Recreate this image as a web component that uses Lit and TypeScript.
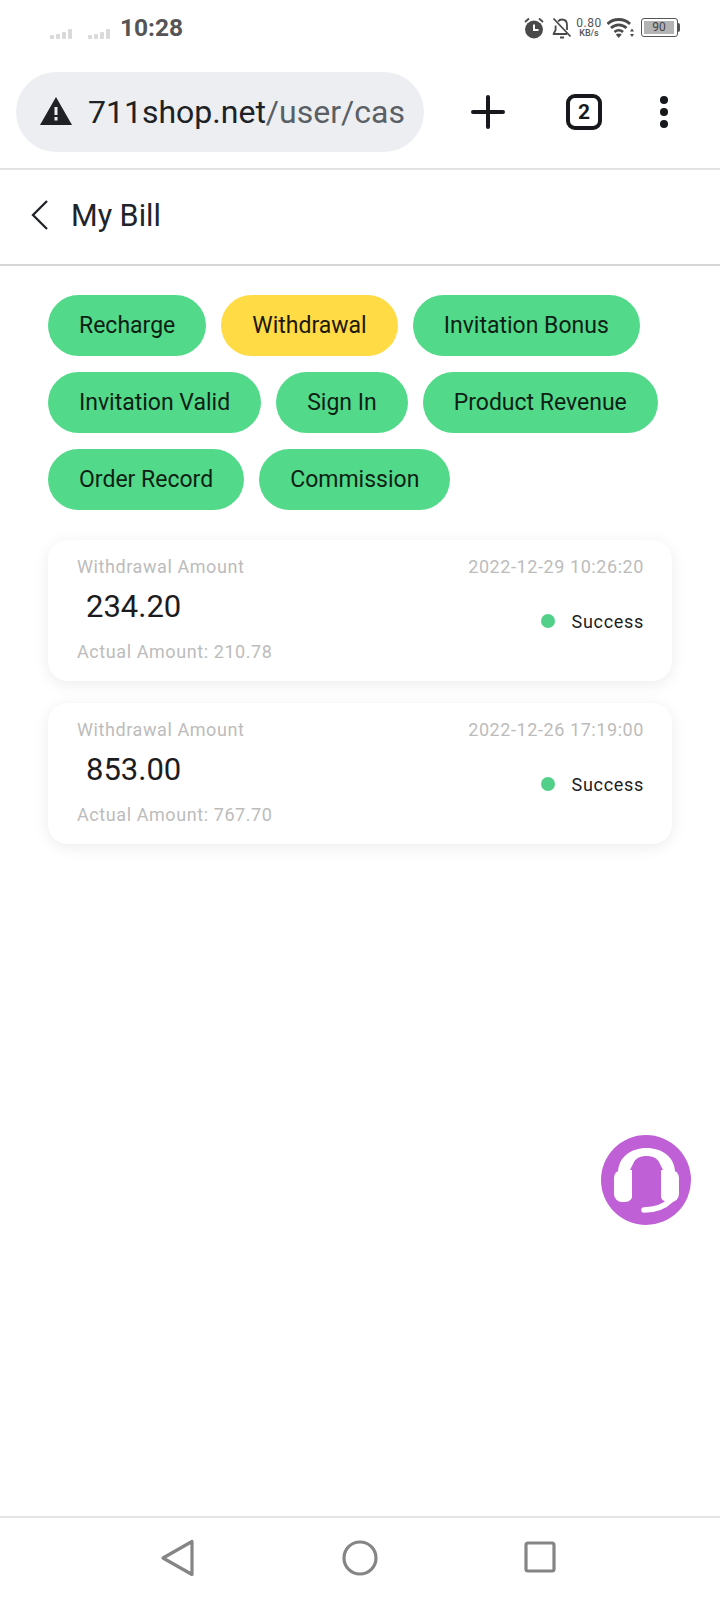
import { LitElement, html, css, svg } from "lit";
import { customElement } from "lit/decorators.js";

const chips = [
  ["Recharge", false],
  ["Withdrawal", true],
  ["Invitation Bonus", false],
  ["Invitation Valid", false],
  ["Sign In", false],
  ["Product Revenue", false],
  ["Order Record", false],
  ["Commission", false],
] as const;

const bills = [
  { date: "2022-12-29 10:26:20", amount: "234.20", actual: "210.78" },
  { date: "2022-12-26 17:19:00", amount: "853.00", actual: "767.70" },
];

const bars = svg`<rect x="0" y="7" width="4" height="4" rx="1"/><rect x="6" y="6" width="4" height="5" rx="1"/><rect x="12" y="4" width="4" height="7" rx="1"/><rect x="18" y="1" width="4" height="10" rx="1"/>`;

@customElement("app-root")
export class AppRoot extends LitElement {
  static styles = css`
    :host {
      display: block;
      width: 720px;
      height: 1600px;
      background: #fff;
      font-family: Roboto, "Liberation Sans", sans-serif;
      color: #1c1c1e;
    }
    .page {
      position: relative;
      display: flex;
      flex-direction: column;
      height: 1600px;
      overflow: hidden;
    }
    .status {
      height: 72px;
      display: flex;
      align-items: flex-start;
      padding: 13px 40px 0 50px;
      box-sizing: border-box;
    }
    .signal {
      width: 23px;
      height: 11px;
      fill: #dadada;
      margin-top: 15px;
      margin-right: 15px;
    }
    .signal + .signal {
      margin-right: 9px;
    }
    .time {
      font-size: 24.5px;
      line-height: 29px;
      font-weight: 700;
      color: #555;
    }
    .status-right {
      margin-left: auto;
      display: flex;
      align-items: center;
      height: 29px;
      color: #4a4a4a;
    }
    .alarm {
      width: 22px;
      height: 22px;
      margin-right: 7px;
    }
    .bell {
      width: 20px;
      height: 22px;
      margin-right: 4px;
    }
    .speed {
      display: flex;
      flex-direction: column;
      align-items: center;
      width: 26px;
      margin-right: 5px;
      color: #555;
    }
    .speed b {
      font-weight: 400;
      font-size: 12px;
      line-height: 12px;
      letter-spacing: 0.5px;
    }
    .speed i {
      font-style: normal;
      font-size: 9px;
      line-height: 9px;
      font-weight: 500;
    }
    .wifi {
      width: 27px;
      height: 22px;
      margin-right: 7px;
    }
    .battery {
      width: 37px;
      height: 19px;
      box-sizing: border-box;
      border: 1.5px solid #555;
      border-radius: 3px;
      padding: 2px;
      display: flex;
    }
    .battery span {
      flex: 1;
      background: #b4b4b4;
      font-size: 12px;
      line-height: 12px;
      text-align: center;
      color: #444;
      margin-right: 1px;
    }
    .cap {
      width: 2px;
      height: 9px;
      background: #555;
      border-radius: 0 2px 2px 0;
    }
    .toolbar {
      height: 98px;
      box-sizing: border-box;
      border-bottom: 2px solid #e2e2e2;
      display: flex;
      align-items: flex-start;
      padding-left: 16px;
    }
    .url {
      width: 408px;
      height: 80px;
      border-radius: 40px;
      background: #eceef1;
      display: flex;
      align-items: center;
      padding-left: 24px;
      box-sizing: border-box;
      overflow: hidden;
      white-space: nowrap;
      font-size: 32px;
      color: #5a5f66;
    }
    .url svg {
      width: 32px;
      height: 29px;
      margin-right: 16px;
      flex: none;
      fill: #202124;
      margin-top: -2px;
    }
    .url em {
      font-style: normal;
      color: #202124;
    }
    .plus {
      width: 34px;
      height: 34px;
      margin: 23px 0 0 47px;
    }
    .tabs {
      width: 36px;
      height: 36px;
      box-sizing: border-box;
      margin: 22px 0 0 61px;
      border: 4px solid #16181b;
      border-radius: 9px;
      display: flex;
      align-items: center;
      justify-content: center;
      font-size: 21px;
      font-weight: 700;
      color: #16181b;
    }
    .more {
      width: 8px;
      height: 32px;
      margin: 24px 0 0 58px;
      fill: #16181b;
    }
    .title {
      height: 96px;
      box-sizing: border-box;
      border-bottom: 2px solid #d6d6d6;
      display: flex;
      align-items: center;
      padding: 0 0 4px 30px;
      font-size: 30.5px;
      color: #20242a;
    }
    .title svg {
      width: 20px;
      height: 32px;
      margin-right: 21px;
    }
    .chips {
      display: flex;
      flex-wrap: wrap;
      gap: 16px 15px;
      padding: 29px 48px 0;
    }
    .chip {
      height: 61px;
      line-height: 62px;
      padding: 0 31px;
      border-radius: 31px;
      background: #52d98a;
      font-size: 23px;
      color: #0f1f14;
    }
    .chip.on {
      background: #ffdc46;
      color: #20180a;
    }
    .cards {
      display: flex;
      flex-direction: column;
      gap: 22px;
      padding: 30px 48px 0;
    }
    .card {
      height: 141px;
      box-sizing: border-box;
      padding: 14px 28px 0 29px;
      border-radius: 20px;
      background: #fff;
      box-shadow: 0 3px 16px rgba(0, 0, 0, 0.08);
      display: flex;
      flex-direction: column;
    }
    .row {
      display: flex;
      justify-content: space-between;
      align-items: center;
    }
    .muted {
      font-size: 18px;
      line-height: 26px;
      color: #bcbcbc;
      letter-spacing: 0.58px;
    }
    .mid {
      height: 58px;
      margin-top: 1px;
    }
    .amount {
      font-size: 31px;
      color: #1c1c1e;
      margin-left: 9px;
      margin-top: -8px;
    }
    .state {
      display: flex;
      align-items: center;
      font-size: 18px;
      color: #1c1c1e;
      letter-spacing: 0.7px;
      margin-top: 22px;
    }
    .dot {
      width: 14px;
      height: 14px;
      border-radius: 50%;
      background: #52d08a;
      margin-right: 17px;
    }
    .spacer {
      flex: 1;
    }
    .fab {
      position: absolute;
      left: 600.5px;
      top: 1135px;
      width: 90px;
      height: 90px;
    }
    .nav {
      height: 84px;
      box-sizing: border-box;
      border-top: 2px solid #e4e4e4;
      display: flex;
      align-items: flex-start;
      padding: 20px 0 0 158px;
      gap: 142px;
    }
    .nav svg {
      width: 40px;
      height: 40px;
      fill: none;
      stroke: #858585;
      stroke-width: 3.2;
      stroke-linejoin: round;
    }
  `;

  render() {
    return html`
      <div class="page">
        <div class="status">
          <svg class="signal" viewBox="0 0 23 11">${bars}</svg>
          <svg class="signal" viewBox="0 0 23 11">${bars}</svg>
          <span class="time">10:28</span>
          <div class="status-right">
            <svg class="alarm" viewBox="0 0 22 22">
              <circle cx="11" cy="12.5" r="9" fill="#4a4a4a" />
              <path d="M2 5 6 1.5M20 5 16 1.5" stroke="#4a4a4a" stroke-width="1.8" fill="none" />
              <path d="M11 7.5V13H15.5" stroke="#fff" stroke-width="2" fill="none" />
            </svg>
            <svg class="bell" viewBox="0 0 20 22" fill="none" stroke="#4a4a4a" stroke-width="1.8">
              <path d="M6 4.5C7 3.2 8.4 2.5 10 2.5c3.4 0 5 2.6 5 5.5v5M3.6 8.5V13L1.5 17H15" stroke-linejoin="round" />
              <path d="M1.5 1.5 18.5 19.5M8 20.5h4" />
            </svg>
            <div class="speed"><b>0.80</b><i>KB/s</i></div>
            <svg class="wifi" viewBox="0 0 27 22" fill="none" stroke="#4a4a4a" stroke-width="2.8">
              <path d="M0.5 7C6.500 1 17 1 23 7M4 11C8.500 6.800 15 6.800 19.500 11M7.500 15C10 12.800 13.500 12.800 16 15" />
              <path d="M11.750 21 8.800 17.500C10.500 16.300 13 16.300 14.700 17.500Z" fill="#4a4a4a" stroke="none" />
              <path d="M25 11.500 23 14.500H27ZM25 20 23 17H27Z" fill="#4a4a4a" stroke="none" />
            </svg>
            <div class="battery"><span>90</span></div>
            <div class="cap"></div>
          </div>
        </div>

        <div class="toolbar">
          <div class="url">
            <svg viewBox="0 0 32 29">
              <path d="M16 0 32 28H0Z" />
              <rect x="14.500" y="10" width="3" height="8" fill="#eceef1" />
              <rect x="14.500" y="20" width="3" height="3.500" fill="#eceef1" />
            </svg>
            <span><em>711shop.net</em>/user/cas</span>
          </div>
          <svg class="plus" viewBox="0 0 34 34" stroke="#16181b" stroke-width="4" stroke-linecap="round">
            <path d="M17 2V32M2 17H32" />
          </svg>
          <div class="tabs">2</div>
          <svg class="more" viewBox="0 0 8 32">
            <circle cx="4" cy="4" r="4" />
            <circle cx="4" cy="16" r="4" />
            <circle cx="4" cy="28" r="4" />
          </svg>
        </div>

        <div class="title">
          <svg viewBox="0 0 20 32" fill="none" stroke="#20242a" stroke-width="2.300">
            <path d="M17 2 3 16 17 30" />
          </svg>
          <span>My Bill</span>
        </div>

        <div class="chips">
          ${chips.map(([t, on]) => html`<div class="chip ${on ? "on" : ""}">${t}</div>`)}
        </div>

        <div class="cards">
          ${bills.map(
            (b) => html`
              <div class="card">
                <div class="row muted">
                  <span>Withdrawal Amount</span>
                  <span>${b.date}</span>
                </div>
                <div class="row mid">
                  <span class="amount">${b.amount}</span>
                  <span class="state"><i class="dot"></i>Success</span>
                </div>
                <div class="muted">Actual Amount: ${b.actual}</div>
              </div>
            `
          )}
        </div>

        <div class="spacer"></div>

        <div class="nav">
          <svg viewBox="0 0 40 40"><path d="M5 20 34 3.500V36.500Z" /></svg>
          <svg viewBox="0 0 40 40"><circle cx="20" cy="20" r="16" /></svg>
          <svg viewBox="0 0 40 40"><rect x="4" y="5" width="28" height="28" rx="2" /></svg>
        </div>

        <svg class="fab" viewBox="0 0 90 90">
          <circle cx="45" cy="45" r="45" fill="#bf60d6" />
          <path d="M17 42V38C17 22 30 13 45.500 13S74 22 74 38V42Z" fill="#fff" />
          <rect x="13" y="35" width="19" height="32" rx="8" fill="#fff" />
          <rect x="59" y="35" width="19" height="32" rx="8" fill="#fff" />
          <path d="M33 27C35 23 40 21 45.500 21S56 23 58 27L62 35H60V70H31V35H29Z" fill="#bf60d6" />
          <path d="M43 75C52 75 63 72 70 65" fill="none" stroke="#fff" stroke-width="5.500" stroke-linecap="round" />
        </svg>
      </div>
    `;
  }
}
